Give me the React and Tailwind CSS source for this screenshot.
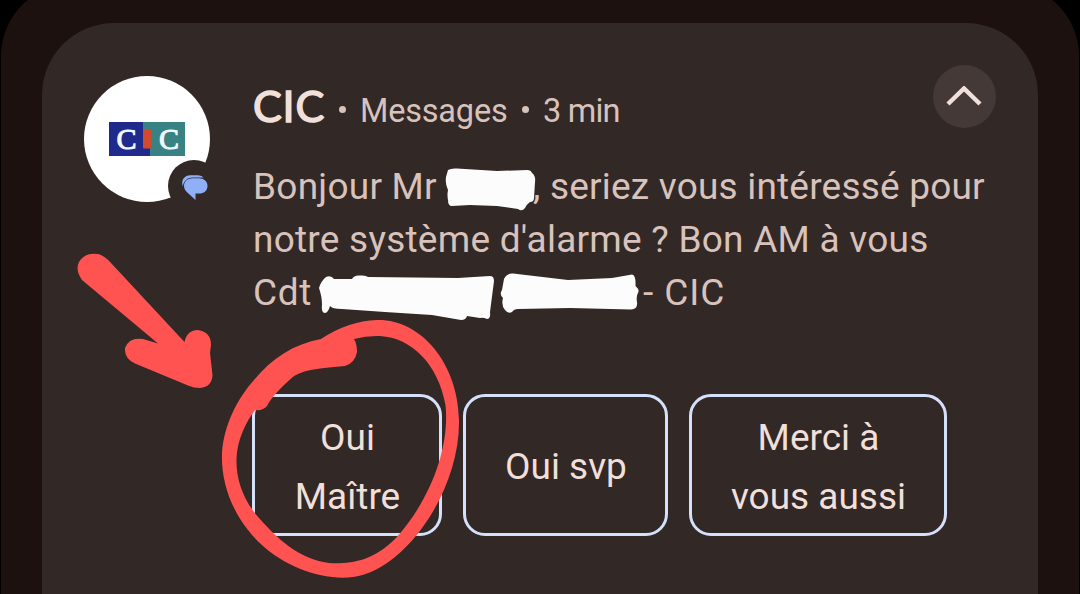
import { memo } from 'react';

const REPLIES = [
  { id: 'master', lines: ['Oui', 'Maître'], size: 'w-[190px]' },
  { id: 'please', lines: ['Oui svp'], size: 'w-[205px]' },
  { id: 'thanks', lines: ['Merci à', 'vous aussi'], size: 'w-[258px]' },
];

/**
 * Bank logo with the messaging app badge
 */
const Avatar = memo(() => (
  <div className="relative w-[126px] h-[126px] shrink-0 rounded-full bg-white">
    <svg className="absolute left-[25px] top-[46px]" width="76" height="34" viewBox="0 0 76 34">
      <rect width="76" height="34" fill="#398284" />
      <path d="M0 0H34V26H41V34H0Z" fill="#202a8c" />
      <rect x="34.5" y="7.5" width="7.5" height="19" fill="#d24a2c" />
      <text x="7.5" y="27" fontSize="30" fontFamily="Liberation Serif, serif" fill="#eefaff" stroke="#eefaff" strokeWidth="1">C</text>
      <text x="50" y="27" fontSize="30" fontFamily="Liberation Serif, serif" fill="#eefaff" stroke="#eefaff" strokeWidth="1">C</text>
    </svg>
    <div className="absolute left-[84px] top-[84px] w-[52px] h-[52px] rounded-full bg-[#322826]">
      <svg className="absolute left-[13px] top-[14px]" width="28" height="28" viewBox="0 0 28 28">
        <path d="M1.8 12.5C-0.5 6 4 1.3 9 1.3H16.5C19.5 1.3 21.5 2.3 22.7 3.6H12C6.5 3.6 2.6 7 1.8 12.5Z" fill="#8fb0f6" />
        <path d="M11.5 4.3H18C23 4.3 26.5 7.5 26.5 12C26.5 16.5 23 19.6 18 19.6H14.5V26L6 18.3C4.1 16.5 3 14.3 3 11.8C3 7.3 6.8 4.3 11.5 4.3Z" fill="#8fb0f6" />
      </svg>
    </div>
  </div>
));

Avatar.displayName = 'Avatar';

const Dot = () => (
  <span className="w-[36px] flex justify-center self-center pt-[7px]">
    <span className="w-[7px] h-[7px] rounded-full bg-[#d8c2bc]" />
  </span>
);

/**
 * Quick reply button
 */
const ReplyButton = ({ lines, size }) => (
  <button className={`${size} h-[142px] pt-[3px] pl-px rounded-[22px] border-3 border-[#d5e0fa] flex flex-col items-center justify-center text-[37px] leading-[59px] text-[#f1dfda]`}>
    {lines.map((line) => (
      <span key={line} className="whitespace-nowrap">{line}</span>
    ))}
  </button>
);

/**
 * Hand drawn marks laid over the notification
 */
const Scribbles = () => (
  <svg className="absolute inset-0 pointer-events-none" width="1080" height="594" viewBox="0 0 1080 594">
    <g fill="#fcfcfc">
      <path d="M448 170Q451 168 457 168.500L497 171L527 170Q531 170 532 173Q536 176 535 182L534 198Q534 202 530 202Q527 204 525 208Q522 212 518 209L497 206L470 205L452 206Q448 206 448 200Q447 195 448 190Q445 184 446 177Z" />
      <path d="M319 288Q321 281 326 277Q331 275 334 279L352 279Q354 275 360 275.500Q366 275 368 277L458 278L490 276Q494 276 494 281L490 312Q491 319 487 319Q483 317 480 318L467 316Q466 320 461 320L432 315L385 312L342 309Q332 309 330 306Q328 313 325 313Q321 313 322 304Q322 297 319 288Z" />
      <path d="M504 279Q507 273 513 273.500L568 280L612 278L632 274.500Q636 275 635.500 286Q640 290 638 293Q636 296 637 302Q638 309 631 309.500L570 308L518 309Q514 309 512 312Q508 314 505 310Q501 305 503 298Q499 294 502 290Z" />
    </g>
    <g fill="#ff5352">
      <path d="M82 280Q75 270 79 262Q85 252 98 254Q105 256 111 263L184.500 342Q187 330 198 330Q211 332 211 345L210 353L212.500 375Q212 387 200 388Q194 388 188 385.500L135 363.500Q124 358 125 348Q129 337 143 339L158 343.500Z" />
      <path fillRule="evenodd" d="M321 339Q348 321 377 320C420 319 458 362 459 420C460 478 424 538 387 563C367 577 349 579 332 577C300 573 268 556 248 530C229 506 221 478 222 453C224 424 238 398 254 380C272 358 294 344 321 339ZM354 339Q367 335.500 380 336C412 338 438 364 445.500 405C450 448 430 501 395 539C372 562 349 564 329 563C298 559 277 538 259 518C243 500 236 479 236.500 459C237 440 246 422 255 410Q263 411 267 406Q273 394 294 376C306 369 322 368 345 366Q355 363 357 352Q357 344 354 339Z" />
    </g>
  </svg>
);

const App = () => (
  <div className="relative w-[1080px] h-[594px] overflow-hidden bg-black px-px font-['Roboto',sans-serif]">
    <div className="-mt-4 h-[640px] rounded-t-[72px] bg-[#1c110f] px-[41px] pt-[39px]">
      <div className="h-[640px] w-[995.5px] rounded-t-[72px] bg-[#322826] pt-[42px] px-[42px] flex">
        <div className="pt-[11px]">
          <Avatar />
        </div>

        <div className="ml-[42px] flex-1 text-[#d8c2bc]">
          <div className="flex items-start justify-between">
            <div className="h-[63px] pt-[19px] pl-px flex items-baseline whitespace-nowrap text-[32.5px] leading-[44px]">
              <h1 className="w-[71px] font-['Lato',sans-serif] text-[43px] font-normal tracking-[0.9px] [-webkit-text-stroke:1.5px_#f1dfda] text-[#f1dfda]">CIC</h1>
              <Dot />
              <span className="w-[147px] tracking-[-0.2px]">Messages</span>
              <Dot />
              <span className="tracking-[-0.8px]">3 min</span>
            </div>
            <button aria-label="Réduire" className="w-[63px] h-[63px] rounded-full bg-[#453937] flex items-center justify-center">
              <svg width="36" height="22" viewBox="0 0 36 22" fill="none" stroke="#f1dfda" strokeWidth="4.5">
                <path d="M2 18L18 2.5L34 18" />
              </svg>
            </button>
          </div>

          <div className="mt-[32px] pl-px text-[37px] leading-[53px] tracking-[0.24px] whitespace-nowrap">
            <p className="flex">
              <span className="w-[280px]">Bonjour Mr</span>
              <span className="w-[17px]">,</span>
              <span className="tracking-[0.2px]">seriez vous intéressé pour</span>
            </p>
            <p>notre système d'alarme ? Bon AM à vous</p>
            <p className="flex">
              <span className="w-[390px] tracking-[0.6px]">Cdt</span>
              <span className="tracking-[0.9px]">- CIC</span>
            </p>
          </div>

          <div className="mt-[75px] flex gap-[21px]">
            {REPLIES.map((reply) => (
              <ReplyButton key={reply.id} {...reply} />
            ))}
          </div>
        </div>
      </div>
    </div>
    <Scribbles />
  </div>
);

export default App;
